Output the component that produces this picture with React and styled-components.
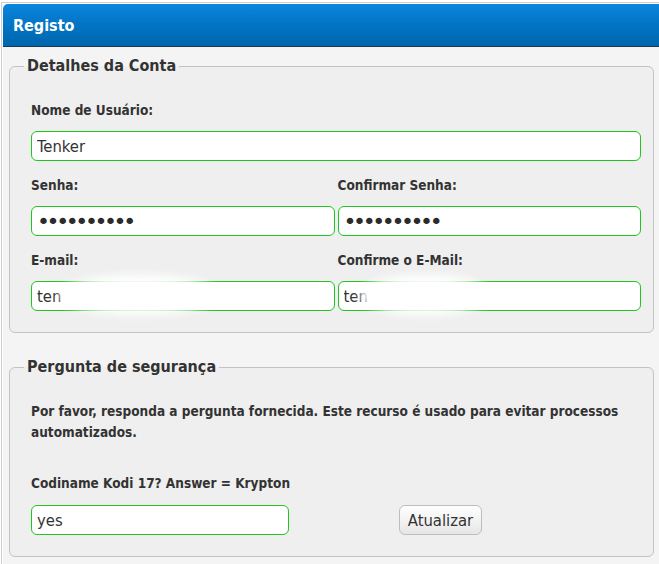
import React from "react";
import styled, { createGlobalStyle } from "styled-components";

const GlobalStyle = createGlobalStyle`
  html, body { margin: 0; padding: 0; background: #ffffff; }
  body { font-family: "DejaVu Sans Condensed", "DejaVu Sans", Tahoma, sans-serif; color: #333; }
  * { box-sizing: border-box; }
`;

const Page = styled.div`
  margin: 2px 0 0 1px;
  border-top: 1px solid #cfcfcf;
  border-left: 1px solid #cfcfcf;
  padding: 1px 0 0 1px;
  background: #ffffff;
`;

const Header = styled.div`
  height: 43px;
  display: flex;
  align-items: center;
  padding-left: 10px;
  border-top-left-radius: 5px;
  background: linear-gradient(to bottom, #0a86dc 0%, #0274c4 50%, #0066ad 100%);
  border-bottom: 1px solid #1b3a4f;
  color: #ffffff;
  font-weight: bold;
  font-size: 16px;
`;

const Body = styled.div`
  background: #f4f4f4;
  padding: 9px 5px 7px 6px;
  display: flex;
  flex-direction: column;
  gap: 24px;
`;

const Fieldset = styled.fieldset`
  margin: 0;
  border: 1px solid #c3c3c3;
  border-radius: 6px;
  background: #efefef;
  padding: ${(p) => p.$pt}px 12px 21px 21px;
  min-width: 0;
`;

const Legend = styled.legend`
  margin-left: -7px;
  padding: 0 3px;
  font-size: 16px;
  font-weight: bold;
  color: #333;
  line-height: 20px;
`;

const Label = styled.div`
  font-size: 13.5px;
  font-weight: bold;
  line-height: 16px;
  color: #333;
  margin-bottom: 13px;
`;

const Grid = styled.div`
  display: grid;
  grid-template-columns: 1fr 1fr;
  column-gap: 3px;
`;

const Field = styled.div`
  margin-bottom: ${(p) => (p.$last ? "0" : "16px")};
  min-width: 0;
`;

const InputWrap = styled.div`
  position: relative;
`;

const Input = styled.input`
  display: block;
  width: ${(p) => p.$width || "100%"};
  height: 30px;
  border: 1px solid #20c520;
  border-radius: 6px;
  background: #ffffff;
  padding: 0 5px;
  font-family: "DejaVu Sans Condensed", "DejaVu Sans", Tahoma, sans-serif;
  font-size: 16.5px;
  color: #333;
  outline: none;
`;

const PasswordInput = styled(Input)`
  font-family: "DejaVu Sans", sans-serif;
  font-size: 22px;
  letter-spacing: -3.4px;
  color: #2b2b2b;
`;

const Redact = styled.span`
  position: absolute;
  left: ${(p) => p.$left}px;
  top: -6px;
  width: ${(p) => p.$width}px;
  height: 40px;
  background: #ffffff;
  border-radius: 50%;
  filter: blur(5px);
  pointer-events: none;
`;

const Intro = styled.p`
  margin: 0;
  font-size: 13.5px;
  font-weight: bold;
  line-height: 21px;
  color: #333;
`;

const Question = styled(Label)`
  margin-top: 32px;
  margin-bottom: 14px;
`;

const AnswerRow = styled.div`
  display: flex;
  align-items: center;
`;

const Button = styled.button`
  margin-left: 110px;
  width: 83px;
  height: 30px;
  border: 1px solid #bdbdbd;
  border-radius: 6px;
  background: linear-gradient(to bottom, #ffffff 0%, #f3f3f3 50%, #e6e6e6 100%);
  font-family: "DejaVu Sans Condensed", "DejaVu Sans", Tahoma, sans-serif;
  font-size: 16.5px;
  color: #333;
  padding: 0;
`;

export default function App() {
  return (
    <>
      <GlobalStyle />
      <Page>
        <Header>Registo</Header>
        <Body>
          <Fieldset $pt={26}>
            <Legend>Detalhes da Conta</Legend>
            <Field>
              <Label>Nome de Usuário:</Label>
              <Input type="text" defaultValue="Tenker" />
            </Field>
            <Grid>
              <Field>
                <Label>Senha:</Label>
                <PasswordInput type="password" defaultValue="abcdefghij" />
              </Field>
              <Field>
                <Label>Confirmar Senha:</Label>
                <PasswordInput type="password" defaultValue="abcdefghij" />
              </Field>
              <Field $last>
                <Label>E-mail:</Label>
                <InputWrap>
                  <Input type="text" defaultValue="ten" />
                  <Redact $left={28} $width={160} />
                </InputWrap>
              </Field>
              <Field $last>
                <Label>Confirme o E-Mail:</Label>
                <InputWrap>
                  <Input type="text" defaultValue="ten" />
                  <Redact $left={22} $width={130} />
                </InputWrap>
              </Field>
            </Grid>
          </Fieldset>
          <Fieldset $pt={24}>
            <Legend>Pergunta de segurança</Legend>
            <Intro>
              Por favor, responda a pergunta fornecida. Este recurso é usado para evitar processos automatizados.
            </Intro>
            <Question>Codiname Kodi 17? Answer = Krypton</Question>
            <AnswerRow>
              <Input type="text" defaultValue="yes" $width="258px" />
              <Button type="button">Atualizar</Button>
            </AnswerRow>
          </Fieldset>
        </Body>
      </Page>
    </>
  );
}
